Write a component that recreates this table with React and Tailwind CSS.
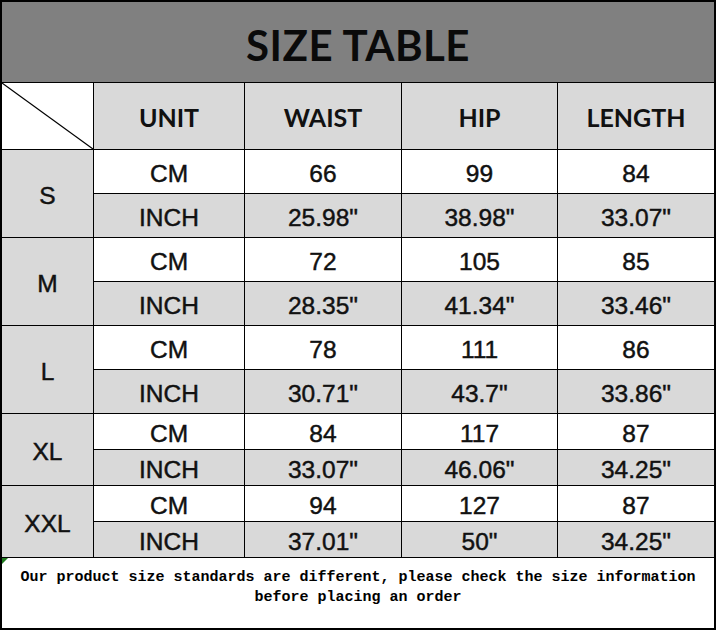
const rows = [
  { size: 'S', cm: ['66', '99', '84'], inch: ['25.98"', '38.98"', '33.07"'] },
  { size: 'M', cm: ['72', '105', '85'], inch: ['28.35"', '41.34"', '33.46"'] },
  { size: 'L', cm: ['78', '111', '86'], inch: ['30.71"', '43.7"', '33.86"'] },
  { size: 'XL', cm: ['84', '117', '87'], inch: ['33.07"', '46.06"', '34.25"'] },
  { size: 'XXL', cm: ['94', '127', '87'], inch: ['37.01"', '50"', '34.25"'] },
];

const headers = ['UNIT', 'WAIST', 'HIP', 'LENGTH'];

const cell = 'flex items-center justify-center text-[24.5px] [-webkit-text-stroke:0.45px_#111] pt-[6px]';

export default function App() {
  return (
    <div className="w-[716px] h-[630px] bg-white">
      <div className="w-full h-full border-2 border-black flex flex-col gap-px bg-black">
        {/* Title */}
        <div className="h-[80px] bg-[#808080] flex items-center justify-center">
          <h1
            className="text-[42px] font-bold text-[#0a0a0a] tracking-[0.5px] leading-none pt-[6px]"
            style={{ fontFamily: 'Lato, "Noto Sans", sans-serif' }}
          >
            SIZE TABLE
          </h1>
        </div>

        {/* Table */}
        <div
          className="grid grid-cols-[91px_150px_156px_155px_156px] grid-rows-[66px_43px_43px_43px_43px_43px_43px_35px_35px_35px_35px] gap-px bg-black text-[#111]"
          style={{ fontFamily: '"Liberation Sans", Arial, sans-serif' }}
        >
          <div className="relative bg-white">
            <svg className="absolute inset-0 w-full h-full" viewBox="0 0 91 66" preserveAspectRatio="none">
              <line x1="0" y1="0" x2="91" y2="66" stroke="#000" strokeWidth="1.2" />
            </svg>
          </div>
          {headers.map((h) => (
            <div
              key={h}
              className="flex items-center justify-center bg-[#d9d9d9] text-[25px] font-bold pt-[4px]"
              style={{ fontFamily: 'Lato, "Noto Sans", sans-serif' }}
            >
              {h}
            </div>
          ))}

          {rows.map((r) => (
            <Group key={r.size} row={r} />
          ))}
        </div>

        {/* Footer note */}
        <div className="h-[70px] bg-white relative">
          <div className="absolute left-0 top-0 w-0 h-0 border-t-[6px] border-t-[#1e7a1e] border-r-[6px] border-r-transparent" />
          <p
            className="text-center text-[15px] leading-[20px] font-bold text-black pt-[10px]"
            style={{ fontFamily: '"Liberation Mono", "Courier New", monospace' }}
          >
            Our product size standards are different, please check the size information
            <br />
            before placing an order
          </p>
        </div>
      </div>
    </div>
  );
}

function Group({ row }) {
  return (
    <>
      <div className={`${cell} row-span-2 bg-[#d9d9d9]`}>{row.size}</div>
      <div className={`${cell} bg-white`}>CM</div>
      {row.cm.map((v, i) => (
        <div key={'c' + i} className={`${cell} bg-white`}>
          {v}
        </div>
      ))}
      <div className={`${cell} bg-[#d9d9d9]`}>INCH</div>
      {row.inch.map((v, i) => (
        <div key={'i' + i} className={`${cell} bg-[#d9d9d9]`}>
          {v}
        </div>
      ))}
    </>
  );
}
